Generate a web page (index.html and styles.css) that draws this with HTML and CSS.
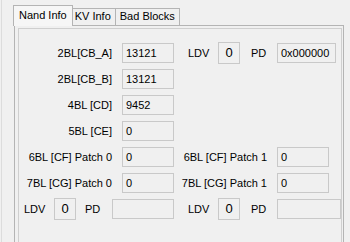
FILE: index.html
```html
<!DOCTYPE html>
<html lang="en">
<head>
  <meta charset="UTF-8" />
  <title>Nand Info</title>
  <link rel="stylesheet" href="styles.css">
</head>
<body>
  <div class="window">
    <div class="tabs">
      <div class="tab active">Nand Info</div>
      <div class="tab">KV Info</div>
      <div class="tab">Bad Blocks</div>
    </div>
    <div class="page">
      <div class="group">
        <div class="row">
          <span class="lbl">2BL[CB_A]</span>
          <span class="box">13121</span>
          <span class="tag ldv">LDV</span>
          <span class="num">0</span>
          <span class="tag pd">PD</span>
          <span class="box pd-top">0x000000</span>
        </div>
        <div class="row">
          <span class="lbl">2BL[CB_B]</span>
          <span class="box">13121</span>
        </div>
        <div class="row">
          <span class="lbl">4BL [CD]</span>
          <span class="box">9452</span>
        </div>
        <div class="row">
          <span class="lbl">5BL [CE]</span>
          <span class="box">0</span>
        </div>
        <div class="row">
          <span class="lbl">6BL [CF] Patch 0</span>
          <span class="box">0</span>
          <span class="lbl">6BL [CF] Patch 1</span>
          <span class="box">0</span>
        </div>
        <div class="row">
          <span class="lbl">7BL [CG] Patch 0</span>
          <span class="box">0</span>
          <span class="lbl">7BL [CG] Patch 1</span>
          <span class="box">0</span>
        </div>
        <div class="row bottom">
          <span class="tag ldv first">LDV</span>
          <span class="num">0</span>
          <span class="tag pd short">PD</span>
          <span class="box pd-left"></span>
          <span class="tag ldv">LDV</span>
          <span class="num">0</span>
          <span class="tag pd">PD</span>
          <span class="box pd-right"></span>
        </div>
      </div>
    </div>
  </div>
</body>
</html>
```

FILE: styles.css
```css
body {
  margin: 0;
  background: #f0f0f0;
  font-family: "Liberation Sans", Arial, sans-serif;
  font-size: 11px;
  color: #000;
}
.window {
  height: 242px;
  box-sizing: border-box;
  padding: 0 6px 0 12px;
  overflow: hidden;
  border-left: 1px solid #dcdcdc;
  margin-left: 1px;
}
.tabs {
  display: flex;
  align-items: flex-end;
  height: 25px;
  padding-left: 2px;
}
.tab {
  height: 16px;
  line-height: 15px;
  padding: 0 4px;
  border: 1px solid #b4b4b4;
  border-bottom: none;
  margin-left: -1px;
  background: #f0f0f0;
}
.tab.active {
  position: relative;
  z-index: 1;
  height: 20px;
  line-height: 18px;
  padding: 0 5px;
  margin: 0 -2px -1px -3px;
  background: #f6f6f6;
}
.page {
  height: 230px;
  box-sizing: border-box;
  border: 1px solid #b4b4b4;
  border-bottom: none;
  padding: 2px 1px 0 3px;
}
.group {
  height: 100%;
  box-sizing: border-box;
  border: 1px solid #cfcfcf;
  border-bottom: none;
  padding-top: 11px;
}
.row {
  display: flex;
  align-items: center;
  height: 26px;
}
.lbl {
  width: 93px;
  margin-right: 10px;
  text-align: right;
  white-space: nowrap;
}
.box {
  width: 52px;
  height: 20px;
  box-sizing: border-box;
  border: 1px solid #c9c9c9;
  padding-left: 3px;
  line-height: 18px;
  background: #f0f0f0;
}
.tag {
  width: 30px;
}
.tag.ldv {
  margin-left: 14px;
}
.tag.ldv.first {
  margin-left: 5px;
}
.tag.pd {
  width: 26px;
  margin-left: 11px;
}
.tag.pd.short {
  width: 27px;
  margin-left: 9px;
}
.num {
  width: 22px;
  height: 22px;
  box-sizing: border-box;
  border: 1px solid #c9c9c9;
  text-align: center;
  line-height: 20px;
  font-size: 13px;
}
.box.pd-top {
  width: 59px;
}
.box.pd-left {
  width: 62px;
}
.box.pd-right {
  width: 64px;
}
```
